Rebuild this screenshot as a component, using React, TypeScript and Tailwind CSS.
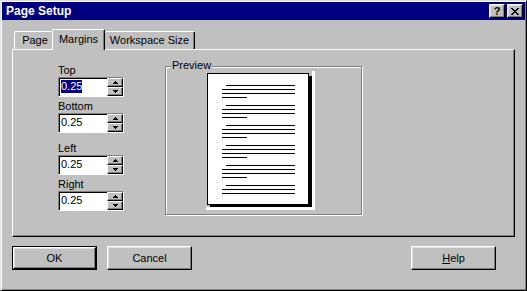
import React from "react";

const fieldItems = [
  { label: "Top", value: "0.25", selected: true, gap: "mt-0" },
  { label: "Bottom", value: "0.25", selected: false, gap: "mt-[3px]" },
  { label: "Left", value: "0.25", selected: false, gap: "mt-[9px]" },
  { label: "Right", value: "0.25", selected: false, gap: "mt-[3px]" },
];

// each paragraph on the preview paper: y offset and number of lines
const paragraphs = [
  { y: 14, lines: 4 },
  { y: 34, lines: 4 },
  { y: 54, lines: 4 },
  { y: 74, lines: 4 },
  { y: 94, lines: 4 },
  { y: 114, lines: 3 },
];

function Arrow({ up }: { up: boolean }) {
  return (
    <svg width="5" height="3" viewBox="0 0 5 3" shapeRendering="crispEdges">
      {up ? (
        <>
          <rect x="2" y="0" width="1" height="1" fill="#000" />
          <rect x="1" y="1" width="3" height="1" fill="#000" />
          <rect x="0" y="2" width="5" height="1" fill="#000" />
        </>
      ) : (
        <>
          <rect x="0" y="0" width="5" height="1" fill="#000" />
          <rect x="1" y="1" width="3" height="1" fill="#000" />
          <rect x="2" y="2" width="1" height="1" fill="#000" />
        </>
      )}
    </svg>
  );
}

function SpinField({
  label,
  value,
  selected,
  gap,
}: {
  label: string;
  value: string;
  selected: boolean;
  gap: string;
}) {
  return (
    <div className={`flex flex-col ${gap}`}>
      <div className="h-[13px] leading-[13px]">{label}</div>
      <div className="flex h-[20px] w-[66px] border border-[#808080] border-r-white border-b-white">
        <div className="flex flex-1 items-start border-t border-l border-black bg-white pl-[1px] pt-px">
          <span
            className={
              selected
                ? "bg-[#000080] leading-[13px] text-white"
                : "leading-[13px]"
            }
          >
            {value}
          </span>
        </div>
        <div className="flex w-[16px] flex-col">
          <div className="flex h-[9px] items-center justify-center border border-white border-r-black border-b-black bg-[#c0c0c0] shadow-[inset_-1px_-1px_0_#808080]">
            <Arrow up />
          </div>
          <div className="flex h-[9px] items-center justify-center border border-white border-r-black border-b-black bg-[#c0c0c0] shadow-[inset_-1px_-1px_0_#808080]">
            <Arrow up={false} />
          </div>
        </div>
      </div>
    </div>
  );
}

function PaperPreview() {
  return (
    <svg
      width="110"
      height="140"
      viewBox="0 0 110 140"
      shapeRendering="crispEdges"
      className="ml-[40px] mt-[4px]"
    >
      <rect x="106" y="0" width="3" height="139" fill="#fff" />
      <rect x="0" y="136" width="109" height="3" fill="#fff" />
      <rect x="103" y="5" width="3" height="131" fill="#000" />
      <rect x="4" y="134" width="102" height="2" fill="#000" />
      <rect x="1" y="2" width="102" height="132" fill="#000" />
      <rect x="2" y="3" width="100" height="130" fill="#fff" />
      {paragraphs.map((p) => (
        <g key={p.y} fill="#000">
          <rect x="20" y={p.y} width="69" height="1" />
          <rect x="16" y={p.y + 4} width="73" height="1" />
          <rect x="16" y={p.y + 8} width="73" height="1" />
          {p.lines === 4 && <rect x="16" y={p.y + 12} width="25" height="1" />}
        </g>
      ))}
    </svg>
  );
}

function DialogButton({
  children,
  isDefault,
  className = "",
}: {
  children: React.ReactNode;
  isDefault?: boolean;
  className?: string;
}) {
  return (
    <div
      className={`h-[24px] w-[85px] ${
        isDefault ? "border border-black" : ""
      } ${className}`}
    >
      <div className="flex h-full w-full items-center justify-center border border-white border-r-black border-b-black bg-[#c0c0c0] shadow-[inset_-1px_-1px_0_#808080,inset_1px_1px_0_#dfdfdf]">
        {children}
      </div>
    </div>
  );
}

function CaptionButton({ children }: { children: React.ReactNode }) {
  return (
    <div className="flex h-[14px] w-[16px] items-center justify-center border border-white border-r-black border-b-black bg-[#c0c0c0] shadow-[inset_-1px_-1px_0_#808080,inset_1px_1px_0_#dfdfdf]">
      {children}
    </div>
  );
}

export default function App() {
  return (
    <div className="flex h-[291px] w-[527px] flex-col border border-[#dfdfdf] border-r-black border-b-black bg-[#c0c0c0] p-px font-['Liberation_Sans',Arial,sans-serif] text-[11px] text-black shadow-[inset_1px_1px_0_#fff,inset_-1px_-1px_0_#808080]">
      {/* title bar */}
      <div className="flex h-[18px] items-center justify-between bg-[#000080] pl-[4px] pr-[2px]">
        <span className="text-[12px] font-bold leading-[14px] text-white">
          Page Setup
        </span>
        <div className="flex gap-[2px]">
          <CaptionButton>
            <span className="text-[11px] font-bold leading-[10px]">?</span>
          </CaptionButton>
          <CaptionButton>
            <svg width="8" height="7" viewBox="0 0 8 7" shapeRendering="crispEdges">
              <path
                fill="#000"
                d="M0 0h2v1h-2zM6 0h2v1h-2zM1 1h2v1h-2zM5 1h2v1h-2zM2 2h4v1h-4zM3 3h2v1h-2zM2 4h4v1h-4zM1 5h2v1h-2zM5 5h2v1h-2zM0 6h2v1h-2zM6 6h2v1h-2z"
              />
            </svg>
          </CaptionButton>
        </div>
      </div>

      <div className="flex flex-col pl-[10px]">
        {/* tabs */}
        <div className="relative z-10 mt-[9px] flex h-[20px] items-end pl-[2px]">
          <div className="flex h-[18px] w-[38px] items-center justify-center rounded-t-[2px] border-t border-l border-white pl-[3px]">
            Page
          </div>
          <div className="-mb-px flex h-[21px] w-[53px] items-center justify-center rounded-t-[2px] border-t border-l border-r border-white border-r-black bg-[#c0c0c0] pb-[2px] shadow-[inset_-1px_0_0_#808080]">
            Margins
          </div>
          <div className="flex h-[18px] w-[90px] items-center justify-center rounded-t-[2px] border-t border-r border-white border-r-black shadow-[inset_-1px_0_0_#808080]">
            Workspace Size
          </div>
        </div>

        {/* tab panel */}
        <div className="flex h-[188px] w-[503px] items-start border border-white border-r-black border-b-black shadow-[inset_-1px_-1px_0_#808080]">
          <div className="ml-[45px] flex flex-col pt-[14px]">
            {fieldItems.map((f) => (
              <SpinField key={f.label} {...f} />
            ))}
          </div>

          <div className="relative ml-[41px] mt-[16px] h-[149px] w-[197px] border border-[#808080] shadow-[inset_1px_1px_0_#fff,1px_1px_0_#fff]">
            <span className="absolute left-[5px] top-[-8px] bg-[#c0c0c0] px-px leading-[13px]">
              Preview
            </span>
            <PaperPreview />
          </div>
        </div>

        {/* buttons */}
        <div className="mt-[9px] flex w-[484px]">
          <DialogButton isDefault>OK</DialogButton>
          <DialogButton className="ml-[10px]">Cancel</DialogButton>
          <DialogButton className="ml-auto">
            <span>
              <span className="underline">H</span>elp
            </span>
          </DialogButton>
        </div>
      </div>
    </div>
  );
}
